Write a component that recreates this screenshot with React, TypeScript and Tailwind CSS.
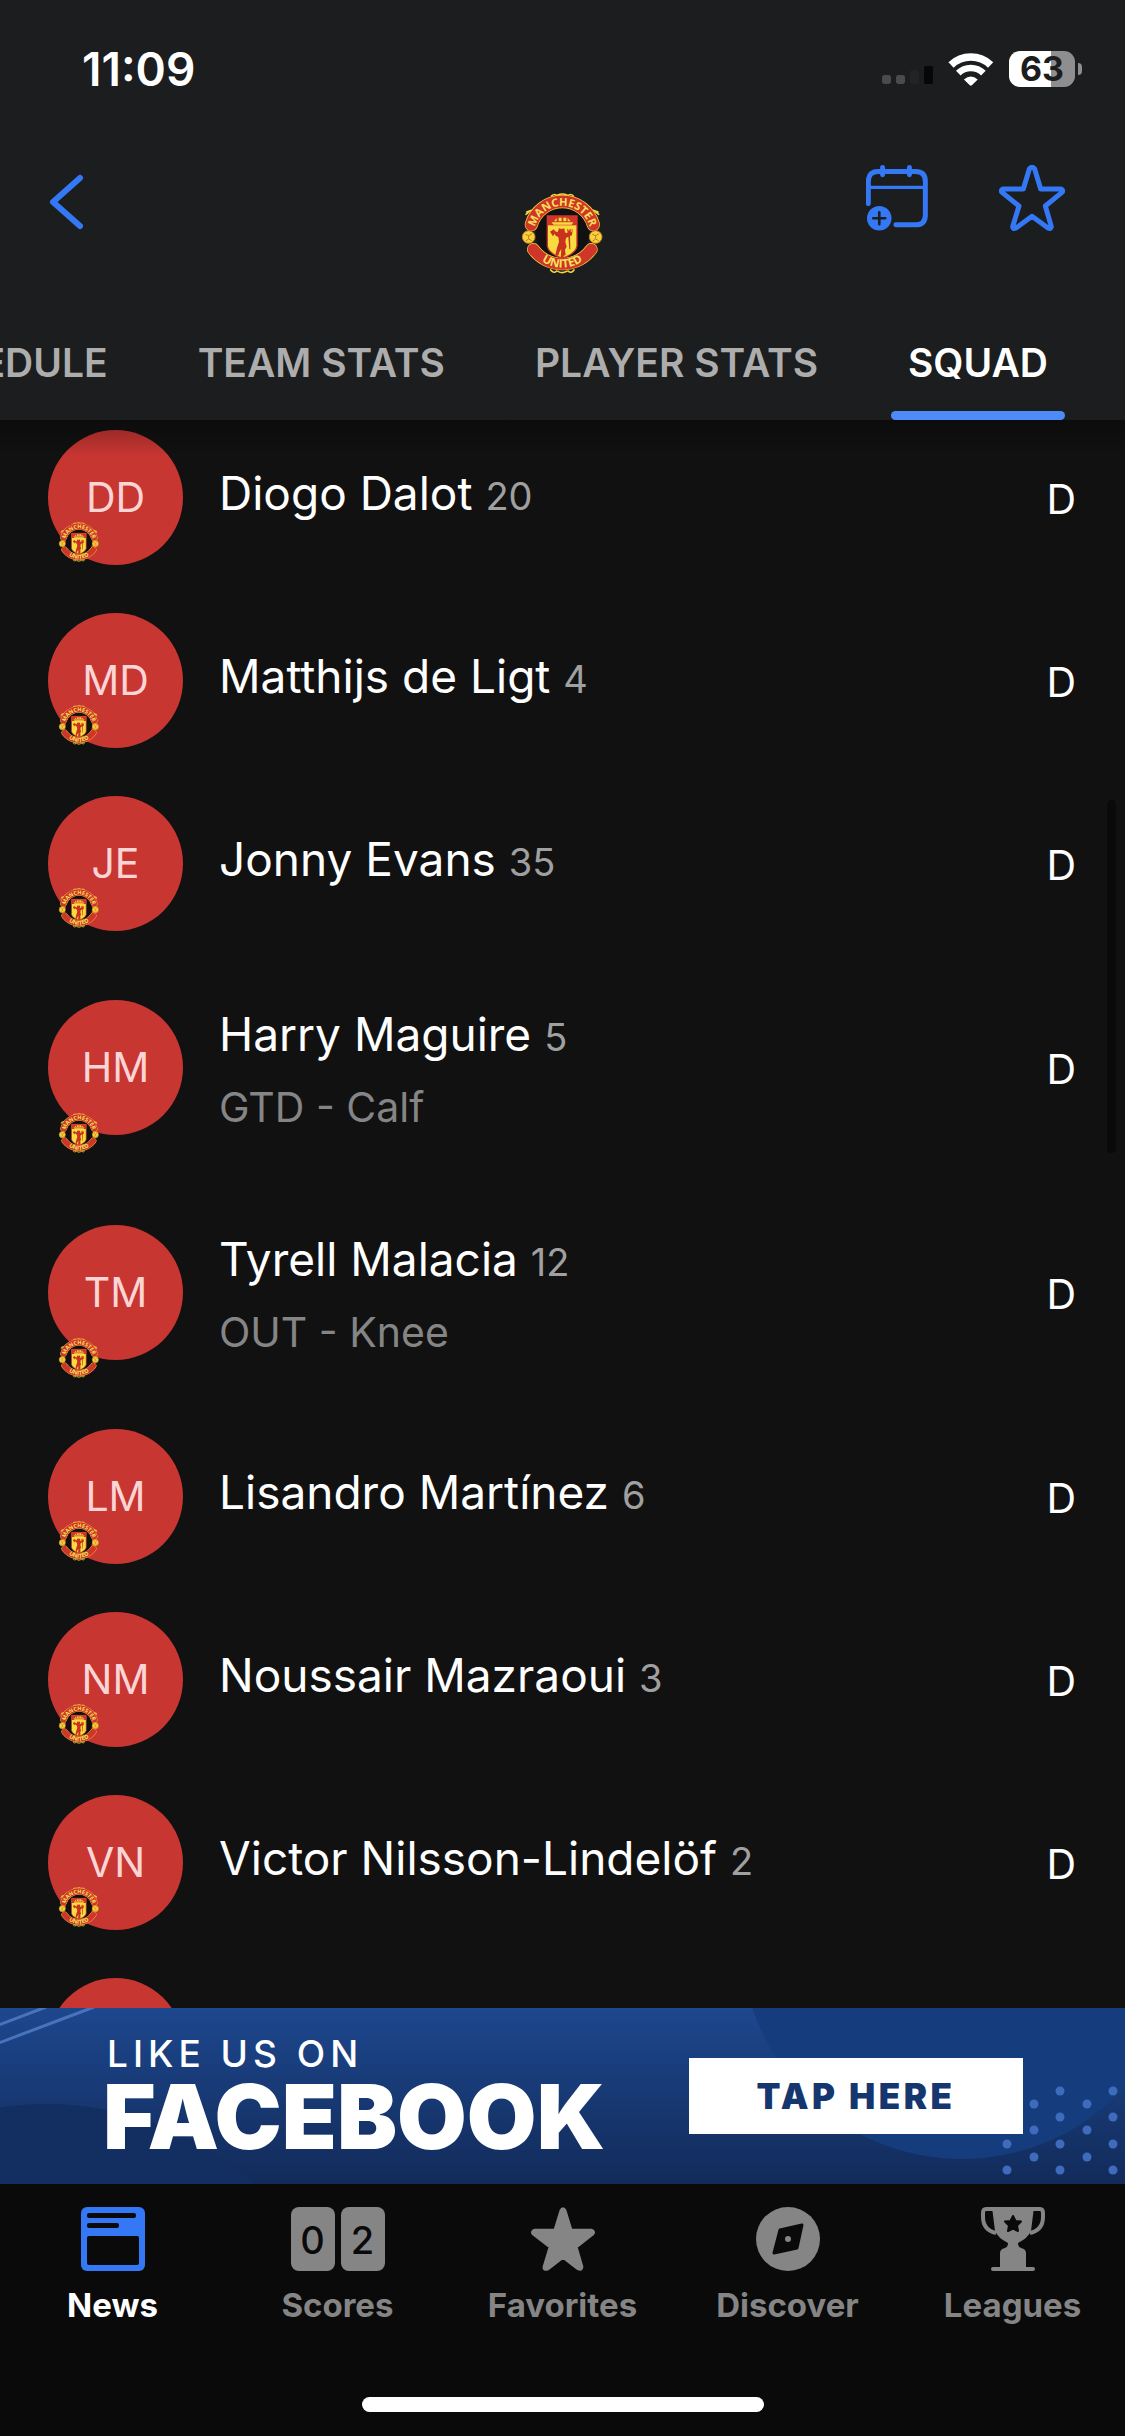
import { useId } from "react";

type Player = {
  name: string;
  initials: string;
  number: number;
  position: string;
  status?: string;
};

const players: Player[] = [
  { name: "Diogo Dalot", initials: "DD", number: 20, position: "D" },
  { name: "Matthijs de Ligt", initials: "MD", number: 4, position: "D" },
  { name: "Jonny Evans", initials: "JE", number: 35, position: "D" },
  { name: "Harry Maguire", initials: "HM", number: 5, position: "D", status: "GTD - Calf" },
  { name: "Tyrell Malacia", initials: "TM", number: 12, position: "D", status: "OUT - Knee" },
  { name: "Lisandro Martínez", initials: "LM", number: 6, position: "D" },
  { name: "Noussair Mazraoui", initials: "NM", number: 3, position: "D" },
  { name: "Victor Nilsson-Lindelöf", initials: "VN", number: 2, position: "D" },
];

const dots = [
  [1007, 136], [1007, 162],
  [1034, 96], [1034, 122], [1034, 149],
  [1060, 83], [1060, 109], [1060, 136], [1060, 162],
  [1087, 96], [1087, 122], [1087, 149],
  [1113, 83], [1113, 109], [1113, 136], [1113, 162],
];

const Crest = ({ className }: { className: string }) => {
  const id = useId();

  return (
    <svg viewBox="70 40 243 243" className={`overflow-visible ${className}`} role="img" aria-label="Manchester United">
      <circle cx="191" cy="164" r="80" fill="#111" />
      <g fill="none" stroke="#f5d33c" strokeWidth="5" strokeLinecap="round">
        <path d="M158 49q10-9 18 0M176 47q15-8 30 0M206 49q10-9 18 0" />
        <path d="M82 104l14-11M84 97l14-5M300 104l-14-11M298 97l-14-5" />
        <path d="M156 271q10 12 18 3M178 275q12 8 26 0M208 274q10 9 18-3" />
      </g>
      <g fill="none" strokeLinecap="round">
        <path d="M98 135A97 97 0 0 1 284 135" stroke="#f5d33c" strokeWidth="40" />
        <path d="M98 135A97 97 0 0 1 284 135" stroke="#cf3529" strokeWidth="36" />
        <path d="M104 209A108 108 0 0 0 278 209" stroke="#f5d33c" strokeWidth="38" />
        <path d="M104 209A108 108 0 0 0 278 209" stroke="#cf3529" strokeWidth="34" />
      </g>
      <path id={`${id}top`} d="M106 164A85 85 0 0 1 276 164" fill="none" />
      <path id={`${id}bottom`} d="M90 190A106 106 0 0 0 292 190" fill="none" />
      <g
        fill="#f8e15a"
        fontFamily="Open Sans, sans-serif"
        fontWeight="700"
        textAnchor="middle"
      >
        <text fontSize="33">
          <textPath href={`#${id}top`} startOffset="50%">MANCHESTER</textPath>
        </text>
        <text fontSize="35">
          <textPath href={`#${id}bottom`} startOffset="50%">UNITED</textPath>
        </text>
      </g>
      <g fill="#f5d33c" stroke="#c8791f" strokeWidth="3">
        <circle cx="90" cy="172" r="19" />
        <circle cx="291" cy="172" r="19" />
        <path d="M80 164l10 4 10-6M90 168v10l-9 6M90 178l9 5M281 164l10 4 10-6M291 168v10l-9 6M291 178l9 5" fill="none" />
      </g>
      <path d="M146 109h89v90q-3 22-44 37q-42-15-45-37z" fill="#f8dc3f" stroke="#cf3529" strokeWidth="4" />
      <path d="M146 109h89v28h-89z" fill="#cf3529" />
      <path d="M158 128h66l-5 7h-54zM166 125l8-10v10zM180 125v-11h9v11zM194 125v-11h9v11zM207 125v-10l9 10z" fill="#f8dc3f" />
      <path
        d="M154 156l11-7 5 6 7 3 4-12 8 2 8-2 2 12 5 3 3-3-2-9h3l3 6 2-7h3v8l3 1v-8h3l-2 18-6 2 1 40h-3l-3-38-7 4-2 12 4 14-5 9 2 15-7 5 6 4h-14l2-26-6 10-3 10-9-2 5-22 6-18-2-14-8-4-3-6-5 8z"
        fill="#c8321f"
      />
    </svg>
  );
};

const StatusBar = () => {
  return (
    <div className="flex h-[138px] items-center justify-between pl-[82px] pr-[43px]">
      <span className="text-[46px] font-semibold leading-none">11:09</span>
      <div className="flex items-center">
        <svg viewBox="126 111 153 54" className="mr-[15px] mt-3 h-[18px] w-[51px]">
          <rect x="126" y="138" width="27" height="27" rx="8" fill="#4a4b4c" />
          <rect x="168" y="138" width="27" height="27" rx="8" fill="#4a4b4c" />
          <rect x="210" y="123" width="27" height="42" rx="8" fill="#222324" />
          <rect x="252" y="111" width="27" height="54" rx="6" fill="#060707" />
        </svg>
        <svg viewBox="325 65 137 100" className="mr-[15px] h-[33px] w-[46px]">
          <g fill="none" stroke="#fff">
            <path d="M333 101A87 87 0 0 1 453 101" strokeWidth="23" />
            <path d="M355 126A54 54 0 0 1 431 126" strokeWidth="20" />
          </g>
          <path d="M372 145Q393 127 414 145L396 163Q393 166 390 163Z" fill="#fff" />
        </svg>
        <div className="flex h-9 w-[66px] items-center justify-center rounded-[11px] bg-linear-to-r from-white from-63% to-[#8e8e8e] to-63% text-[34px] font-bold leading-none text-[#1b1d1e]">
          63
        </div>
        <div className="ml-[3px] h-3 w-1 rounded-r-full bg-[#8e8e8e]" />
      </div>
    </div>
  );
};

const TopNav = () => {
  return (
    <div className="grid h-[168px] grid-cols-3 items-start px-[48px] pt-[27px]">
      <button type="button" aria-label="Back" className="h-[74px] w-9">
        <svg viewBox="0 0 36 56" className="h-[56px] w-9" fill="none" stroke="#3478f6" strokeWidth="6" strokeLinecap="round" strokeLinejoin="round">
          <path d="M32 4L5 28L32 52" />
        </svg>
      </button>
      <Crest className="mt-7 h-[81px] w-[81px] justify-self-center" />
      <div className="flex justify-end gap-[71px] pr-3">
        <button type="button" aria-label="Add to calendar">
          <svg viewBox="78 405 187 198" className="h-[66px] w-[62px]" fill="none" stroke="#3478f6" strokeWidth="15" strokeLinecap="round">
            <path d="M85 521V454Q85 424 115 424H227Q257 424 257 454V555Q257 585 227 585H168" />
            <path d="M85 472H257" strokeWidth="10" />
            <path d="M128 412V434M209 412V434" />
            <circle cx="118" cy="565" r="37" fill="#3478f6" stroke="none" />
            <path d="M100 565H136M118 547V583" stroke="#1b1d1e" strokeWidth="8" />
          </svg>
        </button>
        <button type="button" aria-label="Favorite">
          <svg viewBox="477 405 198 198" className="h-[66px] w-[66px]" fill="none" stroke="#3478f6" strokeWidth="15" strokeLinejoin="round">
            <path d="M568 417Q576 406 584 417L602 477H663Q672 482 665 488L616 528L634 590Q633 598 624 594L576 559L528 594Q518 598 518 590L537 528L487 488Q480 482 489 477H550Z" />
          </svg>
        </button>
      </div>
    </div>
  );
};

const Tabs = () => {
  return (
    <nav className="flex h-[114px] justify-end gap-[56px] overflow-hidden whitespace-nowrap pr-[60px] text-[39px] font-semibold text-[#adadad]">
      <a href="#schedule" className="flex items-center px-[17px]">SCHEDULE</a>
      <a href="#team-stats" className="flex items-center px-[17px]">TEAM STATS</a>
      <a href="#player-stats" className="flex items-center px-[17px]">PLAYER STATS</a>
      <a href="#squad" aria-current="page" className="relative flex items-center px-[17px] text-white">
        SQUAD
        <span className="absolute inset-x-0 bottom-0 h-[9px] rounded-full bg-[#4c8bf8]" />
      </a>
    </nav>
  );
};

const PlayerRow = ({ player }: { player: Player }) => {
  return (
    <li className={`relative flex shrink-0 items-center pl-[48px] pr-[49px] ${player.status ? "h-[225px]" : "h-[183px]"}`}>
      <div className="flex h-[135px] w-[135px] shrink-0 items-center justify-center rounded-full bg-[#c83632] text-[41px] text-[#fbd5d5]">
        {player.initials}
      </div>
      <Crest className="absolute bottom-[27px] left-[59px] h-10 w-10" />
      <div className={`min-w-0 flex-1 pl-[36px] ${player.status ? "pt-3" : "pb-1.5"}`}>
        <p className="text-[46px] leading-[64px] text-white">
          {player.name} <span className="text-[38px] text-[#a0a0a0]">{player.number}</span>
        </p>
        {player.status && <p className="text-[41px] leading-[76px] text-[#858585]">{player.status}</p>}
      </div>
      <span className="pt-1 text-[41px] text-white">{player.position}</span>
    </li>
  );
};

const Banner = () => {
  return (
    <section className="relative flex h-[176px] shrink-0 items-center justify-between overflow-hidden bg-linear-to-b from-[#1d478e] to-[#122b5a] pl-[103px] pr-[102px] text-white">
      <svg viewBox="0 0 1125 176" preserveAspectRatio="none" className="absolute inset-0 h-full w-full">
        <circle cx="46" cy="406" r="310" fill="#132f62" />
        <circle cx="962" cy="-70" r="221" fill="#153c7c" />
        <path d="M-4 18L46 -1M-4 36L94 -1" stroke="#4a73bd" strokeWidth="3" />
        {dots.map(([x, y]) => (
          <circle key={`${x}-${y}`} cx={x} cy={y} r="4.5" fill="#3f6bbd" />
        ))}
      </svg>
      <div className="relative">
        <p className="pl-1 text-[37px] font-medium leading-[42px] tracking-[5px]">LIKE US ON</p>
        <p className="text-[90px] font-black leading-[84px]">FACEBOOK</p>
      </div>
      <button type="button" className="relative h-[76px] w-[334px] bg-white text-[35px] font-black tracking-widest text-[#15366e]">
        TAP HERE
      </button>
    </section>
  );
};

const NewsIcon = () => (
  <svg viewBox="0 0 64 64" className="h-16 w-16">
    <rect width="64" height="64" rx="6" fill="#3478f6" />
    <rect x="6" y="6" width="49" height="5" rx="2" fill="#0a0a0a" />
    <rect x="6" y="16" width="32" height="5" rx="2" fill="#0a0a0a" />
    <rect x="6" y="29" width="52" height="29" rx="2" fill="#0a0a0a" />
  </svg>
);

const ScoresIcon = () => (
  <span className="flex h-16 gap-[6px] text-[38px] font-medium leading-[66px] text-[#0a0a0a]">
    <span className="w-[44px] rounded-lg bg-[#858585] text-center">0</span>
    <span className="w-[44px] rounded-lg bg-[#858585] text-center">2</span>
  </span>
);

const FavoritesIcon = () => (
  <svg viewBox="477 405 198 198" className="h-16 w-16" fill="#858585" stroke="#858585" strokeWidth="14" strokeLinejoin="round">
    <path d="M572 417Q576 408 580 417L599 479H663Q672 482 665 488L614 528L632 590Q632 598 624 594L576 557L528 594Q518 598 520 590L539 528L487 488Q480 482 489 479H553Z" />
  </svg>
);

const DiscoverIcon = () => (
  <svg viewBox="0 0 64 64" className="h-16 w-16">
    <circle cx="32" cy="32" r="32" fill="#858585" />
    <path d="M24 23L46 18L41 41L18 46Z" fill="#0a0a0a" stroke="#0a0a0a" strokeWidth="3" strokeLinejoin="round" />
    <circle cx="32" cy="32" r="3" fill="#858585" />
  </svg>
);

const LeaguesIcon = () => (
  <svg viewBox="0 0 64 64" className="h-16 w-16" fill="#858585">
    <path d="M5 2H59Q62 2 62 6V10Q62 23 49 26M5 2Q2 2 2 6V10Q2 23 15 26" fill="none" stroke="#858585" strokeWidth="4" />
    <path d="M11 0H53L50 24Q47 31 37 36Q37 40 40 41Q45 42 45 46V60H52Q54 60 54 62T52 64H12Q10 64 10 62T12 60H19V46Q19 42 24 41Q27 40 27 36Q17 31 14 24Z" />
    <path d="M32 9L34.5 14L40 14.5L36 18.5L37 24L32 21.5L27 24L28 18.5L24 14.5L29.5 14Z" fill="#0a0a0a" stroke="#0a0a0a" strokeWidth="2" strokeLinejoin="round" />
  </svg>
);

const menu = [
  { label: "News", icon: <NewsIcon />, active: true },
  { label: "Scores", icon: <ScoresIcon /> },
  { label: "Favorites", icon: <FavoritesIcon /> },
  { label: "Discover", icon: <DiscoverIcon /> },
  { label: "Leagues", icon: <LeaguesIcon /> },
];

const BottomNav = () => {
  return (
    <footer className="flex h-[252px] shrink-0 flex-col items-center justify-between bg-[#0a0a0a] pb-6">
      <nav className="grid w-full grid-cols-5 pt-[23px]">
        {menu.map((item) => (
          <a
            key={item.label}
            href={`#${item.label.toLowerCase()}`}
            className={`flex flex-col items-center gap-3 text-[33px] font-bold leading-[44px] ${item.active ? "text-white" : "text-[#858585]"}`}
          >
            {item.icon}
            {item.label}
          </a>
        ))}
      </nav>
      <div className="h-[15px] w-[402px] rounded-full bg-white" />
    </footer>
  );
};

export default function App() {
  return (
    <div className="flex h-screen flex-col overflow-hidden bg-[#111111] font-[Inter,sans-serif] text-white">
      <header className="shrink-0 bg-[#1b1d1e]">
        <StatusBar />
        <TopNav />
        <Tabs />
      </header>
      <main className="relative min-h-0 flex-1 overflow-hidden">
        <ul className="-mt-[14px] flex flex-col">
          {players.map((player) => (
            <PlayerRow key={player.name} player={player} />
          ))}
          <li className="flex h-[183px] shrink-0 items-center px-[48px]">
            <div className="h-[135px] w-[135px] rounded-full bg-[#c83632]" />
          </li>
        </ul>
        <div className="absolute inset-x-0 top-0 h-9 bg-linear-to-b from-black/30 to-transparent" />
        <div className="absolute right-[9px] top-[380px] h-[353px] w-[9px] rounded-full bg-[#0a0a0a]" />
      </main>
      <Banner />
      <BottomNav />
    </div>
  );
}
